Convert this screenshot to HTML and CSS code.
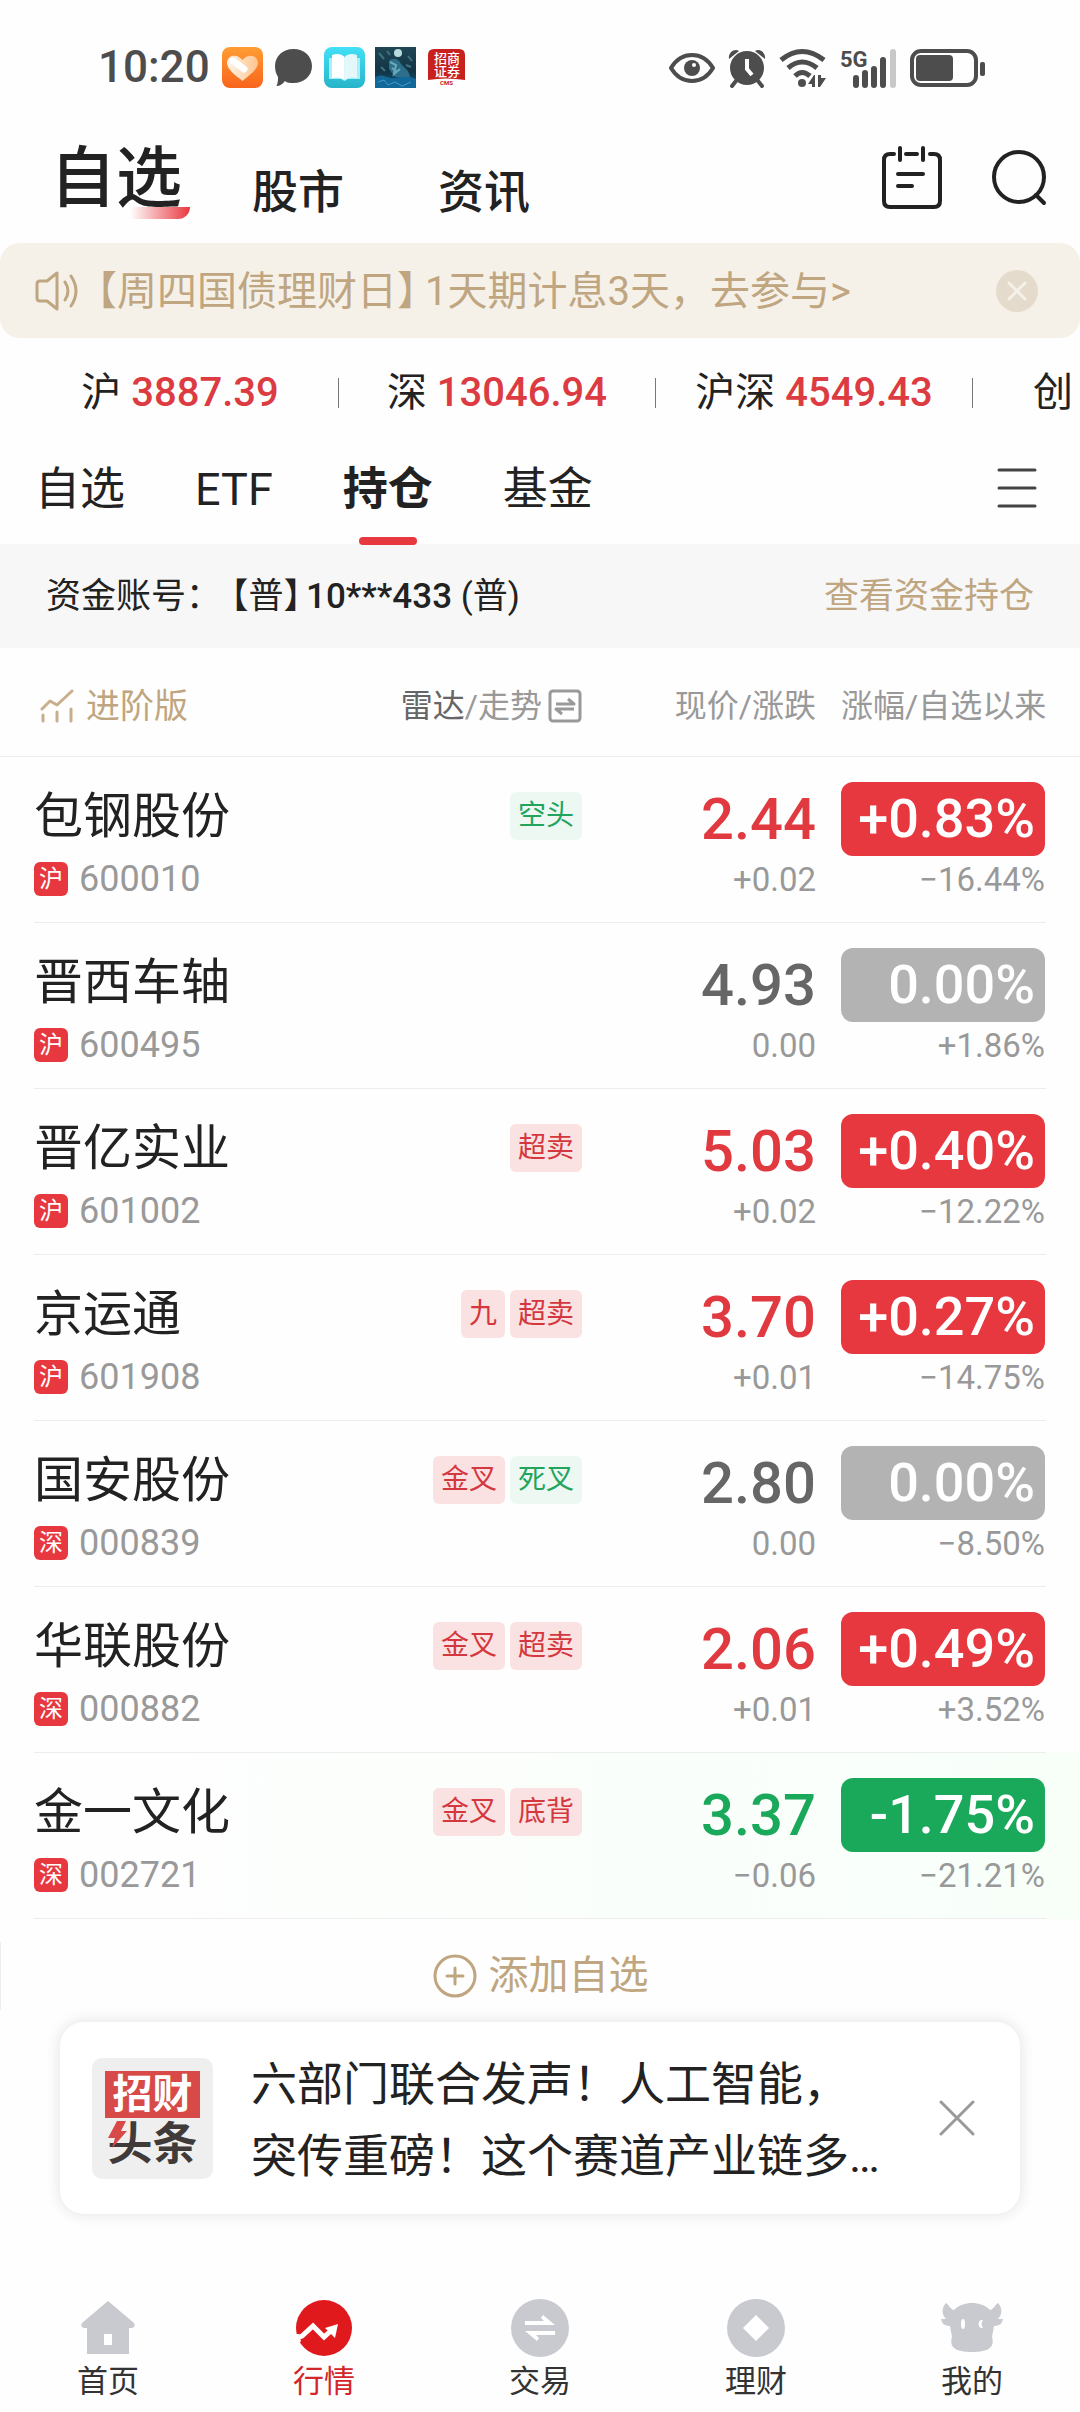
FILE: index.html
```html
<!DOCTYPE html>
<html lang="zh-CN">
<head>
    <meta charset="UTF-8">
    <meta name="viewport" content="width=device-width, initial-scale=1.0">
    <title>自选</title>
    <link rel="stylesheet" href="styles.css">
</head>
<body>
    <div class="status-bar">
        <span class="time">10:20</span>
        <div class="status-apps">
            <svg width="41" height="41" viewBox="0 0 41 41">
                <defs>
                    <linearGradient id="orange" x1="0" y1="0" x2="0" y2="1">
                        <stop offset="0" stop-color="#ff9d33"/>
                        <stop offset="1" stop-color="#f9641c"/>
                    </linearGradient>
                    <linearGradient id="heart" x1="0" y1="0" x2="1" y2="0">
                        <stop offset="0" stop-color="#fff3e8"/>
                        <stop offset="1" stop-color="#ffc48e"/>
                    </linearGradient>
                </defs>
                <rect width="41" height="41" rx="8" fill="url(#orange)"/>
                <path d="M20.500 34C16 30 5 23 5 16C5 8 15 6 20.500 13C26 6 36 8 36 16C36 23 25 30 20.500 34Z" fill="url(#heart)"/>
                <path d="M11 14L22 22" stroke="#fff" stroke-width="7" stroke-linecap="round"/>
            </svg>
            <svg width="41" height="41" viewBox="0 0 41 41">
                <path d="M20.500 2C31 2 39 9 39 19C39 29 31 36 20.500 36C17 36 14 36 12 34C9 38 6 39 3.500 39C5 36 5 33 5 30C3 27 2 23 2 19C2 9 10 2 20.500 2Z" fill="#4d4d4d"/>
            </svg>
            <svg width="41" height="41" viewBox="0 0 41 41">
                <defs>
                    <linearGradient id="cyan" x1="0" y1="0" x2="0" y2="1">
                        <stop offset="0" stop-color="#42e0f8"/>
                        <stop offset="1" stop-color="#27b4c9"/>
                    </linearGradient>
                </defs>
                <rect width="41" height="41" rx="8" fill="url(#cyan)"/>
                <path d="M5 11H36V32H24L20.500 34L17 32H5Z" fill="#a9eff7"/>
                <path d="M8 8C13 6 18 7 20.500 10V33C17 30 12 30 8 31Z" fill="#fff"/>
                <path d="M33 8C28 6 23 7 20.500 10V33C24 30 29 30 33 31Z" fill="#e4f8fb"/>
            </svg>
            <svg width="41" height="41" viewBox="0 0 41 41">
                <defs>
                    <linearGradient id="night" x1="0" y1="0" x2="0" y2="1">
                        <stop offset="0" stop-color="#1f4653"/>
                        <stop offset="0.6" stop-color="#123446"/>
                        <stop offset="1" stop-color="#0e5a85"/>
                    </linearGradient>
                </defs>
                <rect width="41" height="41" fill="url(#night)"/>
                <circle cx="23" cy="6" r="4" fill="#b9dbe0"/>
                <path d="M14 14C18 10 24 12 26 17L33 24L36 32L20 30L14 22Z" fill="#2d6f8b"/>
                <path d="M15 15L21 18L19 27L25 22M17 21L22 25" stroke="#6aa9b8" stroke-width="2" fill="none"/>
                <path d="M0 31C6 26 10 30 15 31C22 32 30 27 41 32V41H0Z" fill="#13689a"/>
                <path d="M4 6L9 12M33 9L37 14M6 20L10 24M31 18L36 20M12 4L15 8" stroke="#3d7381" stroke-width="2"/>
                <path d="M3 35L9 33L13 38L20 35L27 39L36 35" stroke="#3f9cc4" stroke-width="1" fill="none"/>
            </svg>
            <svg width="41" height="41" viewBox="0 0 41 41">
                <path d="M8 2H33Q39 2 39 8V33Q20 30 2 33V8Q2 2 8 2Z" fill="#c8201f"/>
                <text class="cms-name" x="8" y="16">招商</text>
                <text class="cms-name" x="8" y="29">证券</text>
                <text class="cms-code" x="14" y="38">CMS</text>
            </svg>
        </div>
        <div class="status-system">
            <svg width="46" height="40" viewBox="0 0 46 40">
                <path d="M2 20C8 10 15 7 23 7C31 7 38 10 44 20C38 30 31 33 23 33C15 33 8 30 2 20Z" fill="none" stroke="#4d4d4d" stroke-width="4"/>
                <circle cx="23" cy="20" r="8" fill="#4d4d4d"/>
                <circle cx="25" cy="17" r="2" fill="#fff"/>
            </svg>
            <svg width="38" height="40" viewBox="0 0 38 40">
                <path d="M1 11C0 5 6 0 11 3ZM37 11C38 5 32 0 27 3Z" fill="#4d4d4d"/>
                <circle cx="19" cy="20" r="17" fill="#4d4d4d"/>
                <path d="M8 33L4 38M30 33L34 38" stroke="#4d4d4d" stroke-width="4" stroke-linecap="round"/>
                <path d="M19 11V21L24 27" fill="none" stroke="#fff" stroke-width="4"/>
            </svg>
            <svg width="48" height="40" viewBox="0 0 48 40">
                <path d="M2 12Q23 -5 45 12M9 20Q23 8 38 20M16 28Q23 21 31 28" fill="none" stroke="#4d4d4d" stroke-width="5"/>
                <circle cx="23" cy="35" r="4" fill="#4d4d4d"/>
                <path d="M36 27V39H33V36H29L35 27ZM39 27H42V30H47L41 39H39Z" fill="#4d4d4d"/>
            </svg>
            <svg width="57" height="40" viewBox="0 0 57 40">
                <text class="signal-type" x="0" y="19">5G</text>
                <path d="M16 30V37M25 25V37M34 21V37M43 12V37" stroke="#4d4d4d" stroke-width="6" stroke-linecap="round"/>
                <path d="M53 4V37" stroke="#c8c8c8" stroke-width="6" stroke-linecap="round"/>
            </svg>
            <svg width="76" height="40" viewBox="0 0 76 40">
                <rect x="2" y="3" width="64" height="34" rx="9" fill="none" stroke="#4d4d4d" stroke-width="4"/>
                <rect x="6" y="7" width="37" height="26" rx="4" fill="#4d4d4d"/>
                <rect x="70" y="14" width="5" height="14" rx="2" fill="#4d4d4d"/>
            </svg>
        </div>
    </div>

    <header class="top-nav">
        <a href="#" class="top-link active">自选</a>
        <a href="#" class="top-link">股市</a>
        <a href="#" class="top-link">资讯</a>
        <div class="top-actions">
            <button class="icon-button" aria-label="日历">
                <svg width="60" height="64" viewBox="0 0 60 64" fill="none" stroke="#222" stroke-width="4" stroke-linecap="round">
                    <path d="M12 9H8Q2 9 2 15V56Q2 62 8 62H52Q58 62 58 56V15Q58 9 52 9H48M24 9H35M18 3V15M41 3V15M16 29H41M16 41H30"/>
                </svg>
            </button>
            <button class="icon-button" aria-label="搜索">
                <svg width="56" height="64" viewBox="0 0 56 64" fill="none" stroke="#222" stroke-width="4" stroke-linecap="round">
                    <circle cx="27" cy="32" r="25"/>
                    <path d="M44 50L52 58"/>
                </svg>
            </button>
        </div>
    </header>

    <div class="notice">
        <svg width="44" height="40" viewBox="0 0 44 40" fill="none" stroke="#bfa680" stroke-width="3" stroke-linecap="round" stroke-linejoin="round">
            <path d="M5 10H12L22 2V38L12 30H5Q2 30 2 27V13Q2 10 5 10ZM30 11Q36 20 30 29M36 5Q46 20 36 35"/>
        </svg>
        <a href="#" class="notice-text"><span class="notice-title">【周四国债理财日】</span>1天期计息3天，去参与&gt;</a>
        <button class="icon-button" aria-label="关闭公告">
            <svg width="42" height="42" viewBox="0 0 42 42">
                <circle cx="21" cy="21" r="21" fill="#e5dbcc"/>
                <path d="M13 13L29 29M29 13L13 29" stroke="#f5f1e9" stroke-width="3" stroke-linecap="round"/>
            </svg>
        </button>
    </div>

    <ul class="index-list">
        <li>沪 <b>3887.39</b></li>
        <li>深 <b>13046.94</b></li>
        <li>沪深 <b>4549.43</b></li>
        <li class="cut">创</li>
    </ul>

    <nav class="tabs">
        <a href="#" class="tab">自选</a>
        <a href="#" class="tab">ETF</a>
        <a href="#" class="tab active">持仓</a>
        <a href="#" class="tab">基金</a>
        <button class="icon-button tabs-menu" aria-label="菜单">
            <svg width="40" height="42" viewBox="0 0 40 42" stroke="#444" stroke-width="3" stroke-linecap="round">
                <path d="M2 3H38M2 21H38M2 39H38"/>
            </svg>
        </button>
    </nav>

    <div class="account">
        <span>资金账号：<span class="account-type">【普】</span><b>10***433</b> (普)</span>
        <a href="#">查看资金持仓</a>
    </div>

    <table class="stocks">
        <colgroup>
            <col>
            <col class="col-radar">
            <col class="col-price">
            <col class="col-rate">
        </colgroup>
        <thead>
            <tr>
                <th>
                    <a href="#" class="advanced">
                        <svg width="34" height="34" viewBox="0 0 34 34" fill="none" stroke="#c9ae8c" stroke-width="3" stroke-linecap="round" stroke-linejoin="round">
                            <path d="M2 20L10 12L17 16L32 2M3 26V32M17 23V32M31 20V32"/>
                        </svg>
                        进阶版
                    </a>
                </th>
                <th>
                    <button class="radar">
                        <span><span class="radar-on">雷达</span>/走势</span>
                        <svg width="34" height="34" viewBox="0 0 34 34" fill="none" stroke="#999" stroke-width="3" stroke-linejoin="round">
                            <rect x="2" y="2" width="30" height="30" rx="3"/>
                            <path d="M8 15H26L20 10M26 20H8L14 25"/>
                        </svg>
                    </button>
                </th>
                <th>现价/涨跌</th>
                <th>涨幅/自选以来</th>
            </tr>
        </thead>
        <tbody>
            <tr class="up">
                <td><div class="name">包钢股份</div><div class="code"><i>沪</i>600010</div></td>
                <td><div class="tags"><span class="tag tag-green">空头</span></div></td>
                <td><div class="price">2.44</div><div class="sub">+0.02</div></td>
                <td><div class="rate">+0.83%</div><div class="sub">−16.44%</div></td>
            </tr>
            <tr class="flat">
                <td><div class="name">晋西车轴</div><div class="code"><i>沪</i>600495</div></td>
                <td></td>
                <td><div class="price">4.93</div><div class="sub">0.00</div></td>
                <td><div class="rate">0.00%</div><div class="sub">+1.86%</div></td>
            </tr>
            <tr class="up">
                <td><div class="name">晋亿实业</div><div class="code"><i>沪</i>601002</div></td>
                <td><div class="tags"><span class="tag">超卖</span></div></td>
                <td><div class="price">5.03</div><div class="sub">+0.02</div></td>
                <td><div class="rate">+0.40%</div><div class="sub">−12.22%</div></td>
            </tr>
            <tr class="up">
                <td><div class="name">京运通</div><div class="code"><i>沪</i>601908</div></td>
                <td><div class="tags"><span class="tag">九</span><span class="tag">超卖</span></div></td>
                <td><div class="price">3.70</div><div class="sub">+0.01</div></td>
                <td><div class="rate">+0.27%</div><div class="sub">−14.75%</div></td>
            </tr>
            <tr class="flat">
                <td><div class="name">国安股份</div><div class="code"><i>深</i>000839</div></td>
                <td><div class="tags"><span class="tag">金叉</span><span class="tag tag-green">死叉</span></div></td>
                <td><div class="price">2.80</div><div class="sub">0.00</div></td>
                <td><div class="rate">0.00%</div><div class="sub">−8.50%</div></td>
            </tr>
            <tr class="up">
                <td><div class="name">华联股份</div><div class="code"><i>深</i>000882</div></td>
                <td><div class="tags"><span class="tag">金叉</span><span class="tag">超卖</span></div></td>
                <td><div class="price">2.06</div><div class="sub">+0.01</div></td>
                <td><div class="rate">+0.49%</div><div class="sub">+3.52%</div></td>
            </tr>
            <tr class="down flash">
                <td><div class="name">金一文化</div><div class="code"><i>深</i>002721</div></td>
                <td><div class="tags"><span class="tag">金叉</span><span class="tag">底背</span></div></td>
                <td><div class="price">3.37</div><div class="sub">−0.06</div></td>
                <td><div class="rate">-1.75%</div><div class="sub">−21.21%</div></td>
            </tr>
        </tbody>
    </table>

    <button class="add-stock">
        <svg width="44" height="44" viewBox="0 0 44 44" fill="none" stroke="#bfa680" stroke-width="3" stroke-linecap="round">
            <circle cx="22" cy="22" r="20"/>
            <path d="M14 22H30M22 14V30"/>
        </svg>
        添加自选
    </button>

    <div class="news">
        <div class="news-logo">
            <span class="logo-top">招财</span>
            <span class="logo-bottom">头条</span>
            <svg class="logo-bolt" width="24" height="30" viewBox="0 0 24 30">
                <path d="M0 0H24V23H0Z" fill="#efefef"/>
                <path d="M12 1H21L16 11H22L7 28L10 18H3Z" fill="#d84a47"/>
            </svg>
        </div>
        <a href="#" class="news-text">六部门联合发声！人工智能，<br>突传重磅！这个赛道产业链多…</a>
        <button class="icon-button" aria-label="关闭资讯">
            <svg width="36" height="36" viewBox="0 0 36 36" stroke="#999" stroke-width="3" stroke-linecap="round">
                <path d="M2 2L34 34M34 2L2 34"/>
            </svg>
        </button>
    </div>

    <nav class="bottom-nav">
        <a href="#">
            <svg width="60" height="60" viewBox="0 0 60 60">
                <path d="M30 3L56 25Q58 29 54 30H51V56H9V30H6Q2 29 4 25Z" fill="#c9cad0"/>
                <rect x="26" y="36" width="8" height="11" fill="#fff"/>
            </svg>
            首页
        </a>
        <a href="#" class="active">
            <svg width="60" height="60" viewBox="0 0 60 60">
                <circle cx="30" cy="30" r="28" fill="#e0191c"/>
                <path d="M2 40L8 38L19 28L30 39L39 31" fill="none" stroke="#fff" stroke-width="5"/>
                <path d="M31 30L44 26L41 40Z" fill="#fff"/>
                <path d="M0 36H5L7 43L3 48H0Z" fill="#fff"/>
            </svg>
            行情
        </a>
        <a href="#">
            <svg width="60" height="60" viewBox="0 0 60 60">
                <circle cx="30" cy="30" r="29" fill="#c9cad0"/>
                <path d="M15 23H34L31 20L33 17L45 27H15ZM45 37H26L29 40L27 43L15 33H45Z" fill="#fff"/>
            </svg>
            交易
        </a>
        <a href="#">
            <svg width="60" height="60" viewBox="0 0 60 60">
                <circle cx="30" cy="30" r="29" fill="#c9cad0"/>
                <path d="M30 17L43 30L30 43L17 30Z" fill="#fff"/>
            </svg>
            理财
        </a>
        <a href="#">
            <svg width="62" height="60" viewBox="0 0 62 60">
                <path d="M5 5C8 7 9 11 13 12C18 7 24 5 31 5C38 5 44 7 49 12C53 11 54 7 57 5C61 9 62 16 57 21H62C61 26 58 28 53 28L51 39C54 49 48 54 31 54C14 54 8 49 11 39L9 28C4 28 1 26 0 21H5C0 16 1 9 5 5Z" fill="#c9cad0"/>
                <ellipse cx="22" cy="26" rx="2" ry="5" fill="#fff"/>
                <path d="M42 22C36 21 36 31 42 30Q39 26 42 22Z" fill="#fff"/>
            </svg>
            我的
        </a>
    </nav>
</body>
</html>
```
FILE: styles.css
```css
* {
    box-sizing: border-box;
}
body {
    margin: 0;
    background: #fefefe;
    color: #222;
    font-family: Roboto, "Noto Sans CJK SC", sans-serif;
    overflow-x: hidden;
}
a {
    color: inherit;
    text-decoration: none;
}
b {
    font-weight: 500;
}
svg {
    display: block;
    flex-shrink: 0;
}
button {
    padding: 0;
    border: none;
    background: none;
    color: inherit;
    font: inherit;
    cursor: pointer;
}
.icon-button {
    display: flex;
    flex-shrink: 0;
}

/* Status bar */
.status-bar {
    display: flex;
    align-items: center;
    padding: 47px 94px 0 98px;
    color: #4d4d4d;
}
.time {
    font-size: 44px;
    font-weight: 500;
    line-height: 41px;
}
.status-apps {
    display: flex;
    gap: 10px;
    margin-left: 12px;
}
.status-system {
    display: flex;
    gap: 13px;
    margin-left: auto;
}
.cms-name {
    fill: #fff;
    font-size: 13px;
    font-weight: 500;
}
.cms-code {
    fill: #c8201f;
    font-size: 6px;
    font-weight: 700;
}
.signal-type {
    fill: #4d4d4d;
    font-size: 22px;
    font-weight: 700;
}

/* Top navigation */
.top-nav {
    display: flex;
    align-items: flex-end;
    padding: 55px 32px 28px 50px;
}
.top-link {
    position: relative;
    margin-right: 94px;
    font-size: 46px;
    font-weight: 500;
    line-height: 46px;
}
.top-link.active {
    margin-right: 70px;
    font-size: 66px;
    line-height: 72px;
}
.top-link.active::after {
    content: "";
    position: absolute;
    right: -8px;
    bottom: -4px;
    width: 60px;
    height: 12px;
    border-radius: 0 0 14px 0;
    background: linear-gradient(to right, #fff, #e8383f);
}
.top-actions {
    display: flex;
    gap: 50px;
    margin: 0 0 6px auto;
}

/* Notice */
.notice {
    display: flex;
    align-items: center;
    height: 95px;
    padding: 0 42px 0 35px;
    border-radius: 20px;
    background: #f5f1e9;
    color: #bfa680;
}
.notice-text {
    flex: 1;
    margin-left: 18px;
    padding-top: 2px;
    font-size: 40px;
    line-height: 48px;
    white-space: nowrap;
}
.notice-title {
    margin-right: 8px;
    font-feature-settings: "halt";
}

/* Indexes */
.index-list {
    display: flex;
    align-items: center;
    height: 110px;
    margin: 0;
    padding: 0 0 0 22px;
    overflow: hidden;
    list-style: none;
    font-size: 40px;
    line-height: 30px;
}
.index-list li {
    flex: 0 0 317px;
    border-right: 1px solid #777;
    text-align: center;
    white-space: nowrap;
}
.index-list .cut {
    padding-left: 60px;
    text-align: left;
}
.index-list b {
    color: #db3b41;
}

/* Tabs */
.tabs {
    display: flex;
    align-items: center;
    gap: 70px;
    height: 96px;
    padding: 0 43px 0 35px;
}
.tab {
    position: relative;
    font-size: 45px;
    line-height: 92px;
    margin-bottom: 12px;
}
.tab.active {
    font-weight: 700;
}
.tab.active::after {
    content: "";
    position: absolute;
    left: 50%;
    bottom: -9px;
    width: 58px;
    height: 8px;
    margin-left: -29px;
    border-radius: 4px;
    background: #e8383f;
}
.tabs-menu {
    margin: 0 0 16px auto;
}

/* Account */
.account {
    display: flex;
    align-items: center;
    justify-content: space-between;
    height: 104px;
    padding: 2px 46px 0;
    background: #f7f7f7;
    font-size: 35px;
    line-height: 40px;
}
.account a {
    color: #bfa680;
}
.account-type {
    margin: 0 5px 0 10px;
    font-feature-settings: "halt";
}

/* Stock table */
.stocks {
    width: 100%;
    border-collapse: collapse;
    table-layout: fixed;
}
.col-radar {
    width: 250px;
}
.col-price {
    width: 234px;
}
.col-rate {
    width: 264px;
}
.stocks th,
.stocks td {
    padding: 0;
    text-align: right;
    white-space: nowrap;
}
.stocks th {
    padding-top: 6px;
    color: #999;
    font-size: 32px;
    font-weight: 400;
    line-height: 40px;
}
.stocks th:first-child,
.stocks td:first-child {
    padding-left: 34px;
    text-align: left;
}
.stocks th:last-child,
.stocks td:last-child {
    padding-right: 35px;
    padding-left: 25px;
}
.stocks thead tr {
    height: 109px;
    background: linear-gradient(#ededed, #ededed) 0 100% / 100% 1px no-repeat;
}
.stocks tbody tr {
    height: 166px;
    background: linear-gradient(#ededed, #ededed) 34px 100% / calc(100% - 68px) 1px no-repeat;
}
.stocks tbody tr.flash {
    background:
        linear-gradient(#ededed, #ededed) 34px 100% / calc(100% - 68px) 1px no-repeat,
        linear-gradient(to right, #fefefe, #f8fff9);
}
.stocks tbody td {
    padding-top: 25px;
    vertical-align: top;
}
.advanced {
    display: flex;
    align-items: center;
    gap: 12px;
    padding-left: 6px;
    color: #bfa680;
    font-size: 34px;
}
.radar {
    display: inline-flex;
    align-items: center;
    gap: 6px;
}
.radar-on {
    color: #666;
}
.name {
    font-size: 49px;
    line-height: 70px;
}
.code {
    display: flex;
    align-items: center;
    gap: 11px;
    margin-top: 9px;
    color: #999;
    font-size: 36px;
    line-height: 36px;
}
.code i {
    width: 34px;
    height: 34px;
    border-radius: 6px;
    background: #e8383f;
    color: #fff;
    font-size: 24px;
    font-style: normal;
    line-height: 34px;
    text-align: center;
}
.tags {
    display: flex;
    justify-content: flex-end;
    gap: 5px;
    padding-top: 10px;
}
.tag {
    padding: 0 8px;
    border-radius: 6px;
    background: #fae2e2;
    color: #d5373e;
    font-size: 28px;
    line-height: 48px;
}
.tag-green {
    background: #edf8f3;
    color: #22a45d;
}
.price {
    font-size: 58px;
    font-weight: 500;
    line-height: 74px;
}
.rate {
    padding-right: 10px;
    border-radius: 12px;
    color: #fff;
    font-size: 54px;
    font-weight: 500;
    line-height: 74px;
}
.sub {
    margin-top: 4px;
    color: #999;
    font-size: 33px;
    line-height: 40px;
}
.up .price {
    color: #e03a40;
}
.up .rate {
    background: #e8383f;
}
.flat .price {
    color: #666;
}
.flat .rate {
    background: #b3b3b3;
}
.down .price {
    color: #1aa95b;
}
.down .rate {
    background: #1aa95b;
}

/* Add button */
.add-stock {
    display: flex;
    align-items: center;
    justify-content: center;
    gap: 12px;
    width: 100%;
    height: 68px;
    margin-top: 23px;
    border-left: 1px solid #ededed;
    color: #bfa680;
    font-size: 40px;
    line-height: 44px;
}

/* News card */
.news {
    display: flex;
    align-items: center;
    height: 192px;
    margin: 12px 60px 0;
    padding: 0 45px 0 32px;
    border-radius: 24px;
    background: #fff;
    box-shadow: 0 0 14px 2px rgba(0, 0, 0, 0.09);
}
.news-logo {
    position: relative;
    flex-shrink: 0;
    width: 121px;
    height: 121px;
    padding: 13px;
    border-radius: 10px;
    background: #efefef;
    font-size: 45px;
    font-weight: 700;
    line-height: 47px;
    text-align: center;
}
.logo-top,
.logo-bottom {
    display: block;
}
.logo-top {
    background: #d84a47;
    color: #fff;
    font-size: 40px;
}
.logo-bottom {
    margin-top: 3px;
    color: #403a39;
}
.logo-bolt {
    position: absolute;
    left: 13px;
    top: 62px;
}
.news-text {
    flex: 1;
    margin-left: 38px;
    padding-top: 3px;
    font-size: 46px;
    line-height: 72px;
    white-space: nowrap;
}

/* Bottom navigation */
.bottom-nav {
    display: grid;
    grid-template-columns: repeat(5, 1fr);
    padding: 84px 0 12px;
}
.bottom-nav a {
    display: flex;
    flex-direction: column;
    align-items: center;
    gap: 6px;
    color: #333;
    font-size: 31px;
    line-height: 36px;
}
.bottom-nav .active {
    color: #d3262b;
}
```
